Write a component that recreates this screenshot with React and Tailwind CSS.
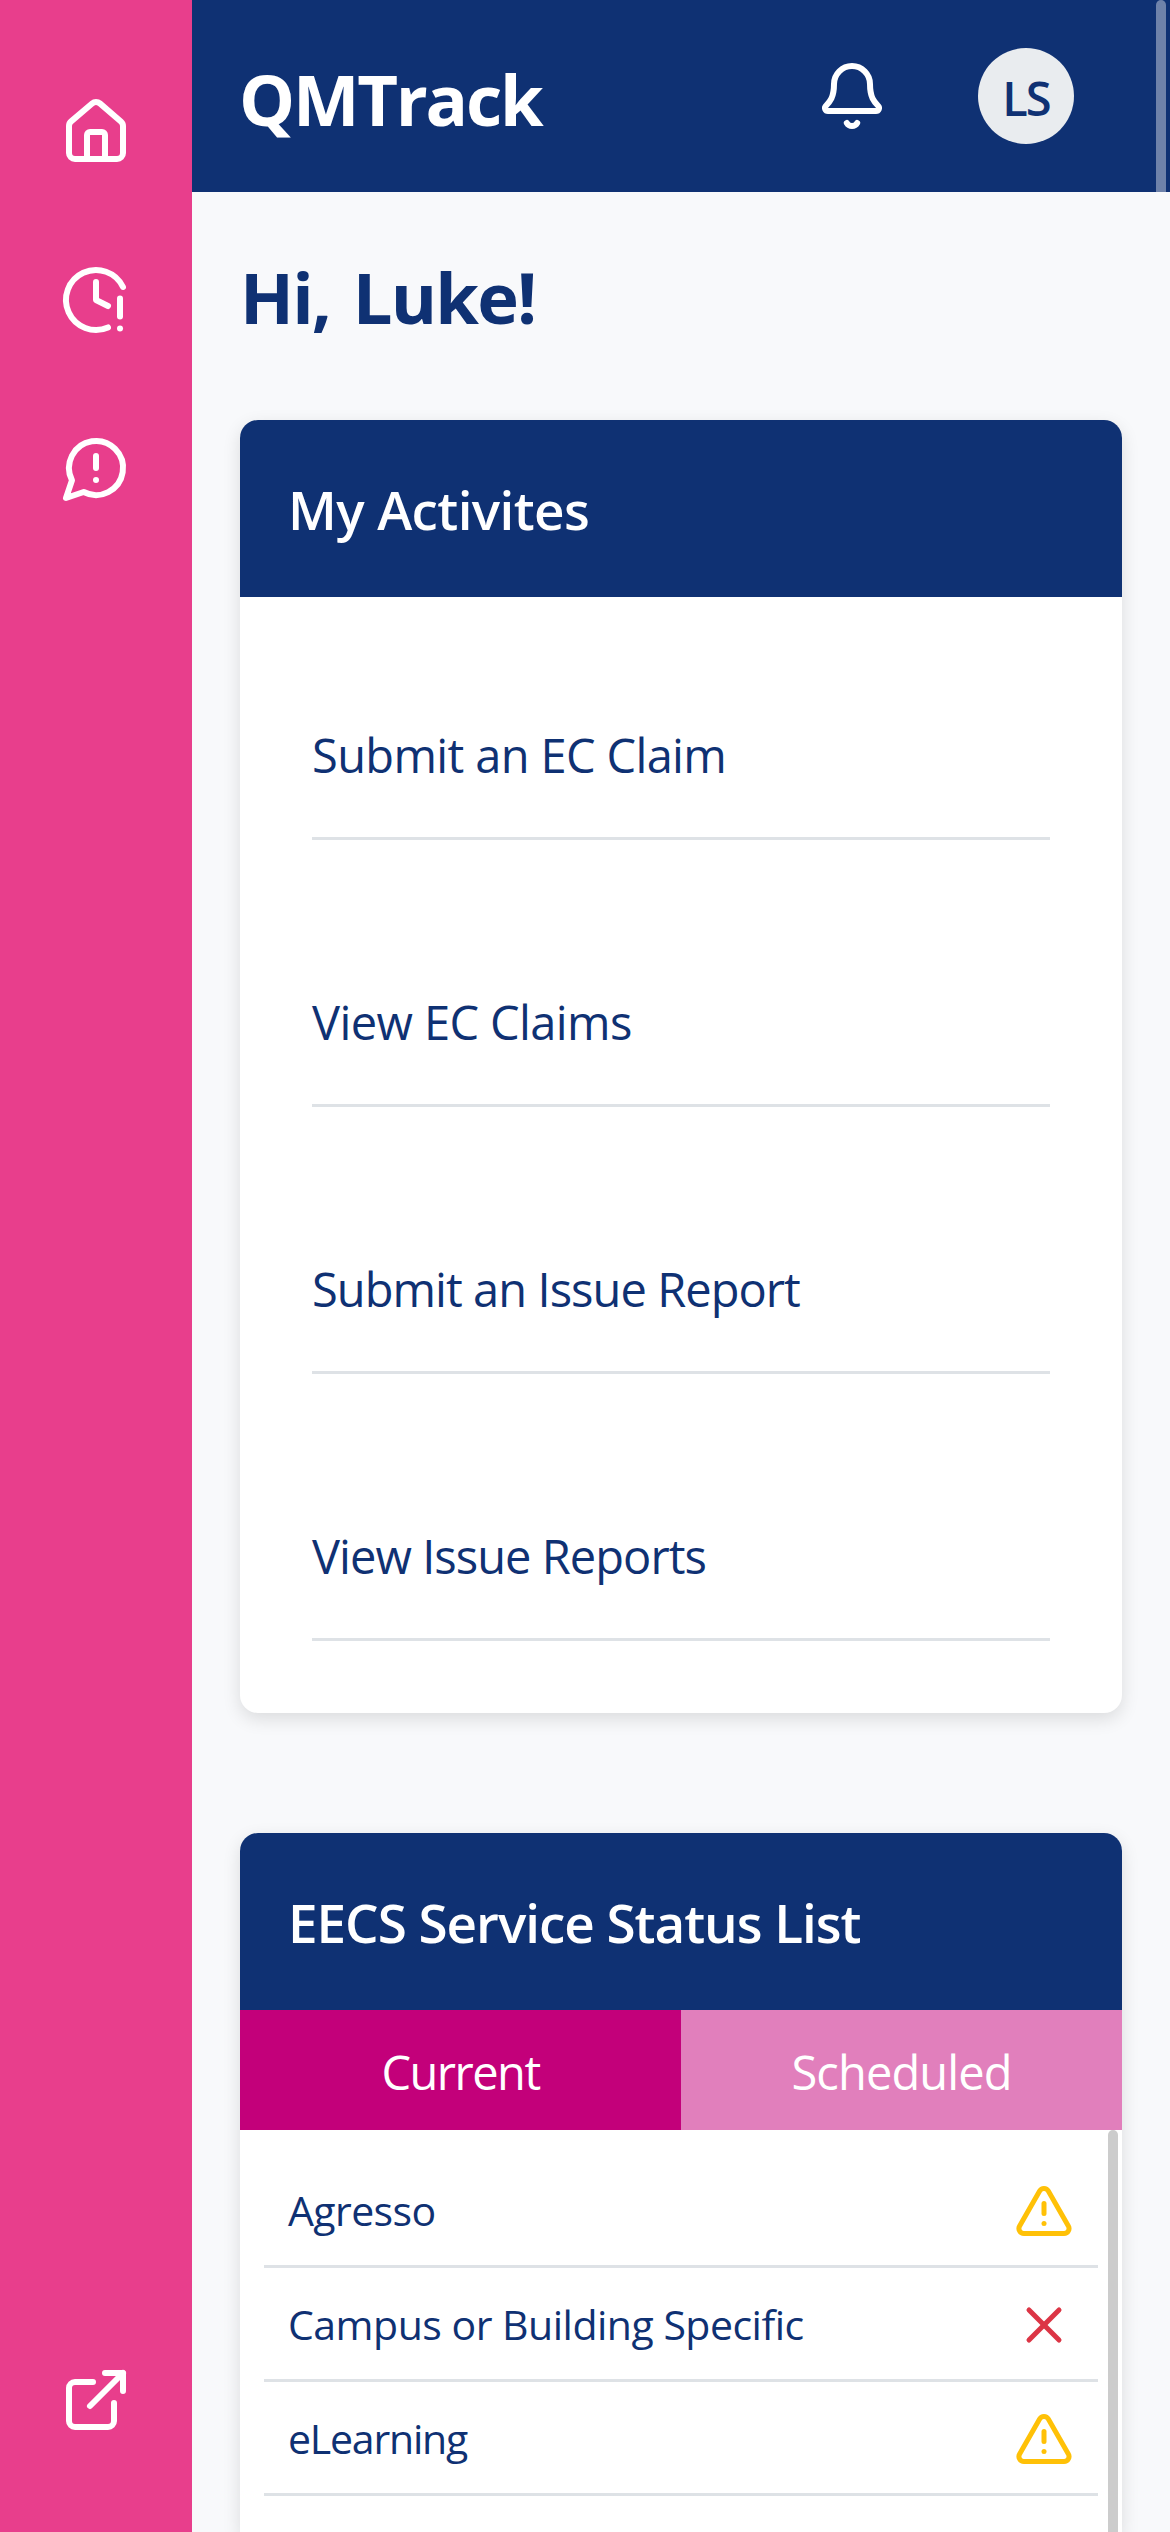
import React from "react";
import { House, Bell, ExternalLink, TriangleAlert, X } from "lucide-react";
import clsx from "clsx";

function StrokeIcon({ children }) {
  return (
    <svg
      className="size-[72px]"
      viewBox="0 0 24 24"
      fill="none"
      stroke="currentColor"
      strokeWidth="2"
      strokeLinecap="round"
      strokeLinejoin="round"
    >
      {children}
    </svg>
  );
}

function ClockAlertIcon() {
  return (
    <StrokeIcon>
      <path d="M12 6v6l4 2" />
      <path d="M16 21.16a10 10 0 1 1 5-13.516" />
      <path d="M20 11.5v6" />
      <path d="M20 21.5h.01" />
    </StrokeIcon>
  );
}

function MessageWarningIcon() {
  return (
    <StrokeIcon>
      <path d="M7.9 20A9 9 0 1 0 4 16.1L2 22Z" />
      <path d="M12 8v4" />
      <path d="M12 16h.01" />
    </StrokeIcon>
  );
}

const activities = [
  { label: "Submit an EC Claim", tracking: "tracking-[-0.64px]" },
  { label: "View EC Claims", tracking: "tracking-[-0.6px]" },
  { label: "Submit an Issue Report", tracking: "tracking-[-0.94px]" },
  { label: "View Issue Reports", tracking: "tracking-[-0.95px]" },
];

const services = [
  { name: "Agresso", status: "warning", tracking: "tracking-[-0.59px]" },
  { name: "Campus or Building Specific", status: "down", tracking: "tracking-[-0.5px]" },
  { name: "eLearning", status: "warning", tracking: "tracking-[-1.2px]" },
];

function Sidebar() {
  return (
    <nav className="flex w-48 shrink-0 flex-col items-center justify-between bg-[#e83e8c] pt-24 pb-24 text-white">
      <div className="flex flex-col gap-24">
        <House className="size-[72px]" />
        <ClockAlertIcon />
        <MessageWarningIcon />
      </div>
      <ExternalLink className="size-[72px]" />
    </nav>
  );
}

function Header() {
  return (
    <header className="relative flex h-48 shrink-0 items-center justify-between bg-[#0f3173] pr-24 pl-[47px]">
      <span className="pt-2 text-[70.5px] font-bold tracking-[-2.2px] text-white">QMTrack</span>
      <div className="flex items-center gap-[90px]">
        <Bell className="size-[72px] text-white" />
        <div className="flex size-24 items-center justify-center rounded-full bg-[#e9ecef] pt-1 text-[47px] font-semibold tracking-[-2px] text-[#0f3173]">
          LS
        </div>
      </div>
      <div className="absolute top-0 right-1 h-48 w-2.5 rounded-t-full bg-[#6e82aa]" />
    </header>
  );
}

function Card({ title, tracking, className, children }) {
  return (
    <section
      className={clsx(
        "flex flex-col overflow-hidden rounded-t-[18px] bg-white shadow-[0_6px_18px_rgba(0,0,0,0.12)]",
        className
      )}
    >
      <h2
        className={clsx(
          "flex h-[177px] shrink-0 items-center bg-[#0f3173] px-12 pt-0.5 text-[53px] font-semibold text-white",
          tracking
        )}
      >
        {title}
      </h2>
      {children}
    </section>
  );
}

function StatusIcon({ status }) {
  return status === "down" ? (
    <X className="size-[60px] text-[#dc3545]" />
  ) : (
    <TriangleAlert className="size-[60px] text-[#ffc107]" />
  );
}

export default function App() {
  return (
    <div className="flex h-[2532px] w-[1170px] overflow-hidden bg-[#f8f9fb] font-['Open_Sans',sans-serif] text-[#0f3173]">
      <Sidebar />
      <div className="flex min-w-0 flex-1 flex-col">
        <Header />
        <main className="flex min-h-0 flex-1 flex-col overflow-hidden px-12 pt-12">
          <h1 className="mb-[66px] shrink-0 text-[70.5px] leading-[114px] font-bold tracking-[-1.8px] [word-spacing:6px]">
            Hi, Luke!
          </h1>

          <Card title="My Activites" tracking="tracking-[-0.6px]" className="shrink-0 rounded-b-[18px] pb-[72px]">
            <ul className="px-[72px]">
              {activities.map((item) => (
                <li
                  key={item.label}
                  className={clsx(
                    "flex h-[267px] items-end border-b-3 border-[#dee2e6] pb-[46px] text-[47px] leading-[72px] first:h-[243px]",
                    item.tracking
                  )}
                >
                  {item.label}
                </li>
              ))}
            </ul>
          </Card>

          <Card
            title="EECS Service Status List"
            tracking="tracking-[-1.04px]"
            className="mt-[120px] min-h-0 flex-1"
          >
            <div className="grid h-[120px] shrink-0 grid-cols-2 text-[47px] text-white">
              <div className="flex items-center justify-center bg-[#c3007a] pt-1 tracking-[-1.51px]">Current</div>
              <div className="flex items-center justify-center bg-[#e17fbc] pt-1 tracking-[-0.9px]">Scheduled</div>
            </div>
            <div className="flex min-h-0 flex-1">
              <ul className="mr-2.5 flex-1 pt-6 pl-6">
                {services.map((service) => (
                  <li
                    key={service.name}
                    className="flex h-[114px] items-start justify-between border-b-3 border-[#dee2e6] px-6 pt-[27px]"
                  >
                    <span className={clsx("text-[41px] leading-[58px]", service.tracking)}>{service.name}</span>
                    <StatusIcon status={service.status} />
                  </li>
                ))}
              </ul>
              <div className="mr-1 w-2.5 rounded-t-full bg-[#cccccc]" />
            </div>
          </Card>
        </main>
      </div>
    </div>
  );
}
